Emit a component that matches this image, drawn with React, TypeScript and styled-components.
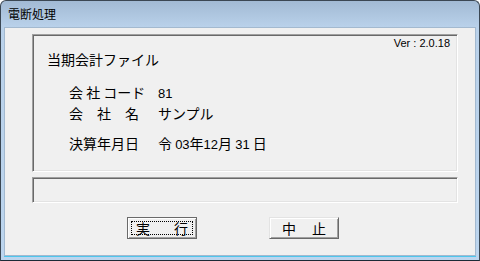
import React from 'react';
import styled, { createGlobalStyle } from 'styled-components';

const GlobalStyle = createGlobalStyle`
  html, body {
    margin: 0;
    padding: 0;
    background: #ffffff;
  }
  * {
    box-sizing: border-box;
  }
`;

const Window = styled.div`
  width: 480px;
  height: 261px;
  display: flex;
  flex-direction: column;
  border: 1px solid #3b4753;
  border-bottom-color: #1c2a36;
  border-radius: 6px 6px 0 0;
  background: linear-gradient(#a2bad4 0px, #b9d1ea 26px, #bcd5ee 100%);
  font-family: "Noto Sans CJK JP", "Noto Sans", sans-serif;
  color: #000;
  overflow: hidden;
`;

const TitleBar = styled.div`
  height: 26px;
  flex: none;
  display: flex;
  align-items: center;
  padding: 0 0 1px 7px;
  font-size: 12px;
  color: #000;
`;

const Client = styled.div`
  flex: 1;
  margin: 0 3px 4px 3px;
  border: 1px solid #a3b9cf;
  background: #f0f0f0;
  padding: 6px 17px 0 27px;
  display: flex;
  flex-direction: column;
  box-shadow: 0 1px 0 #4ec6ec;
`;

const Sunken = styled.div<{ $h: number }>`
  height: ${(p) => p.$h}px;
  border-top: 1px solid #a0a0a0;
  border-left: 1px solid #a0a0a0;
  border-right: 1px solid #ffffff;
  border-bottom: 1px solid #ffffff;
  box-shadow: inset 1px 1px 0 #696969, inset -1px -1px 0 #e3e3e3;
`;

const Panel = styled(Sunken)`
  display: flex;
  flex-direction: column;
  padding: 2px 7px 0 14px;
`;

const Version = styled.div`
  align-self: flex-end;
  font-family: "Liberation Sans", "Noto Sans", sans-serif;
  font-size: 11px;
  line-height: 13px;
`;

const Heading = styled.div`
  margin-top: 1px;
  font-size: 14px;
  line-height: 16px;
`;

const Row = styled.div<{ $top: number }>`
  display: flex;
  margin-top: ${(p) => p.$top}px;
  padding-left: 22px;
  font-size: 14px;
  line-height: 16px;
`;

const Label = styled.span`
  width: 89px;
  white-space: pre;
`;

const Value = styled.span`
  white-space: pre;
`;

const Num = styled.span`
  font-family: "Liberation Sans", "Noto Sans", sans-serif;
  font-size: 13px;
`;

const Status = styled(Sunken)`
  margin-top: 5px;
`;

const ButtonRow = styled.div`
  display: flex;
  gap: 72px;
  margin-top: 14px;
  padding-left: 95px;
`;

const Button = styled.button<{ $default?: boolean; $spacing: number }>`
  width: 70px;
  height: 22px;
  padding: 0 0 0 ${(p) => p.$spacing}px;
  margin: 0;
  background: #f0f0f0;
  font-family: "Noto Sans CJK JP", sans-serif;
  font-size: 14px;
  line-height: 16px;
  letter-spacing: ${(p) => p.$spacing}px;
  color: #000;
  white-space: pre;
  border: 1px solid ${(p) => (p.$default ? '#6a6a6a' : '#e3e3e3')};
  border-right-color: #696969;
  border-bottom-color: #696969;
  box-shadow: inset 1px 1px 0 #ffffff, inset -1px -1px 0 #a0a0a0;
  position: relative;
  outline: none;
`;

const FocusRing = styled.span`
  position: absolute;
  left: 3px;
  top: 3px;
  right: 3px;
  bottom: 3px;
  border: 1px dotted #000;
`;

export default function App() {
  return (
    <>
      <GlobalStyle />
      <Window>
        <TitleBar>電断処理</TitleBar>
        <Client>
          <Panel $h={138}>
            <Version>Ver : 2.0.18</Version>
            <Heading>当期会計ファイル</Heading>
            <Row $top={17}>
              <Label>会 社 コード</Label>
              <Value>
                <Num>81</Num>
              </Value>
            </Row>
            <Row $top={3}>
              <Label>会　社　名</Label>
              <Value>サンプル</Value>
            </Row>
            <Row $top={14}>
              <Label>決算年月日</Label>
              <Value>
                令 <Num>03</Num>年<Num>12</Num>月 <Num>31</Num> 日
              </Value>
            </Row>
          </Panel>
          <Status $h={26} />
          <ButtonRow>
            <Button $default $spacing={5}>
              <FocusRing />
              実　行
            </Button>
            <Button $spacing={1}>中　止</Button>
          </ButtonRow>
        </Client>
      </Window>
    </>
  );
}
